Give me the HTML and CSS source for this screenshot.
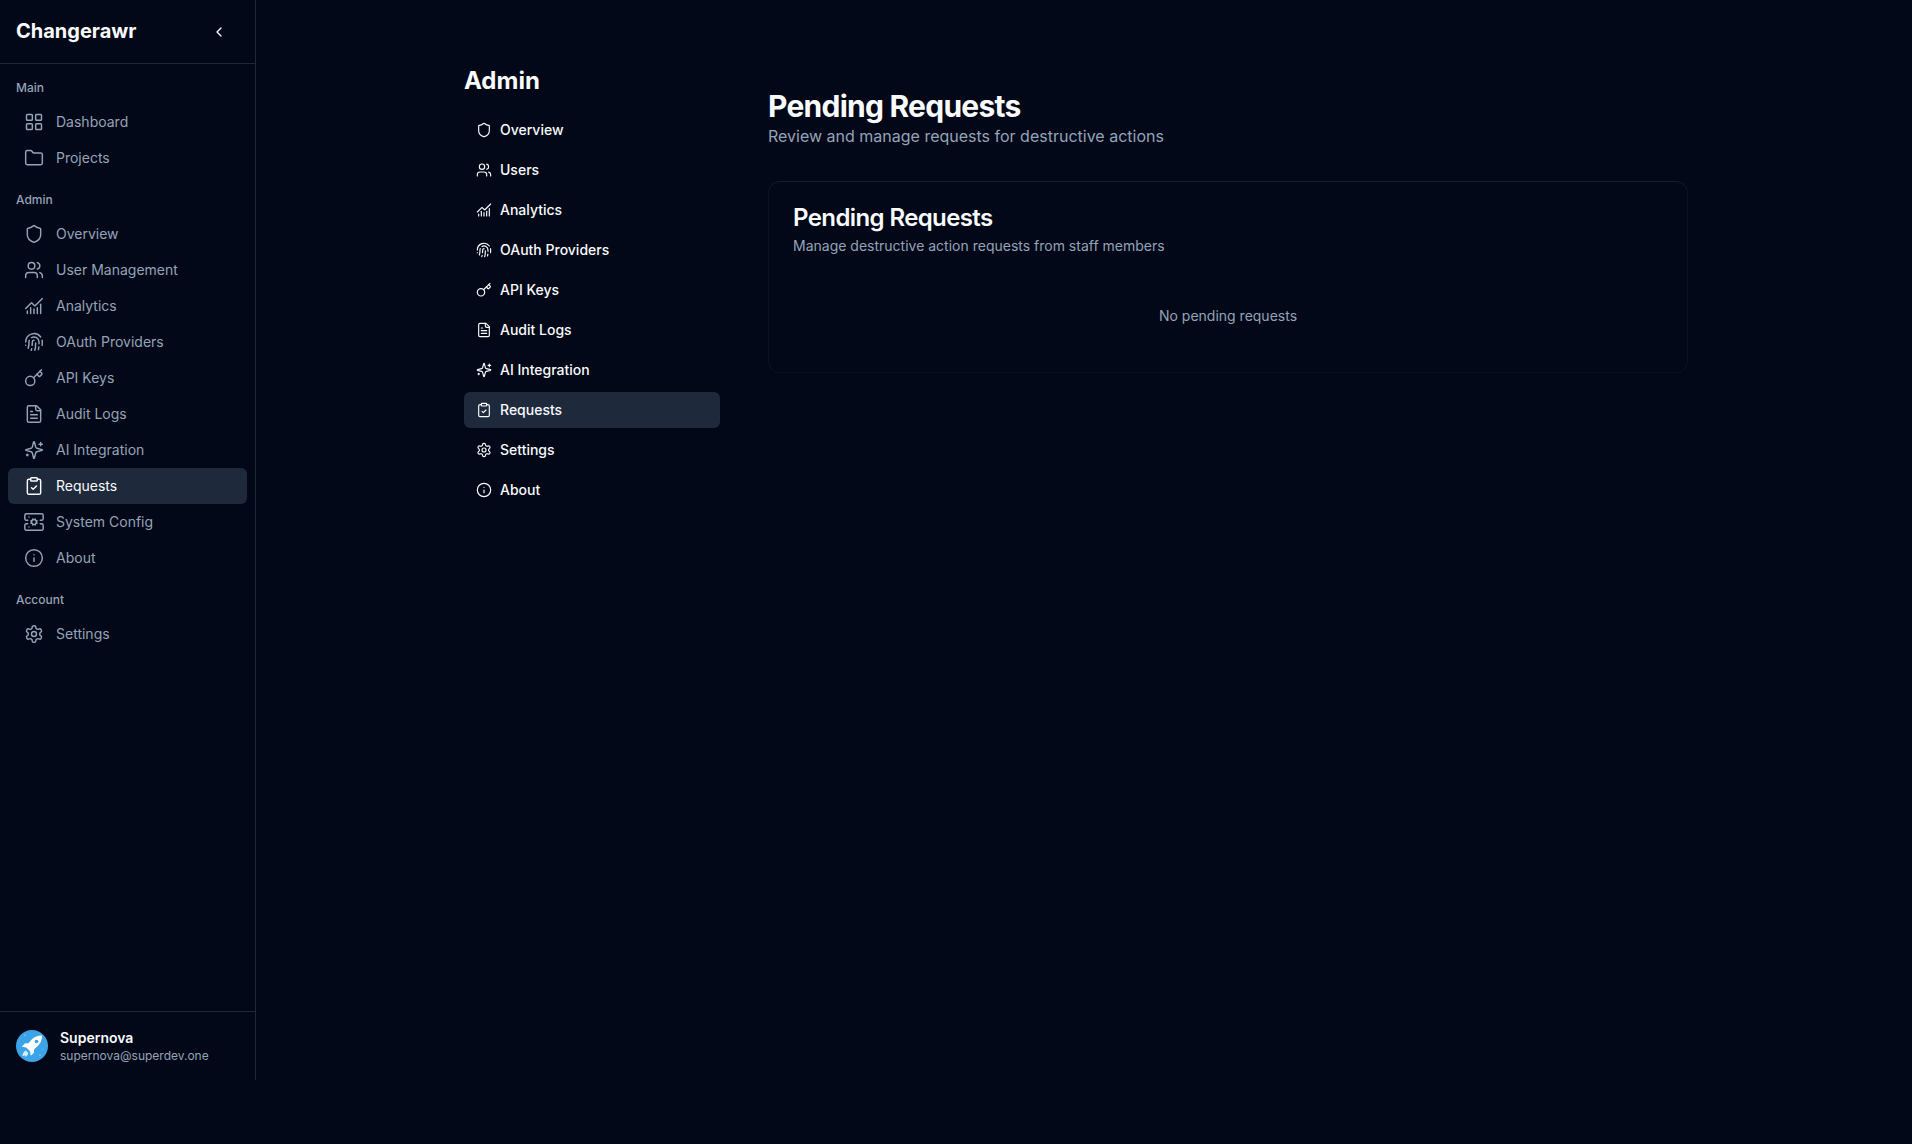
FILE: index.html
```html
<!DOCTYPE html>
<html lang="en">
<head>
    <meta charset="UTF-8">
    <meta name="viewport" content="width=device-width, initial-scale=1.0">
    <title>Pending Requests</title>
    <link rel="stylesheet" href="styles.css">
</head>
<body>

    <!-- Icon set, reused by both menus -->
    <svg class="icon-defs" xmlns="http://www.w3.org/2000/svg">
        <symbol id="i-grid" viewBox="0 0 24 24"><rect x="3" y="3" width="7" height="7" rx="1"/><rect x="14" y="3" width="7" height="7" rx="1"/><rect x="14" y="14" width="7" height="7" rx="1"/><rect x="3" y="14" width="7" height="7" rx="1"/></symbol>
        <symbol id="i-folder" viewBox="0 0 24 24"><path d="M20 20a2 2 0 0 0 2-2V8a2 2 0 0 0-2-2h-7.9a2 2 0 0 1-1.69-.9L9.6 3.9A2 2 0 0 0 7.93 3H4a2 2 0 0 0-2 2v13a2 2 0 0 0 2 2Z"/></symbol>
        <symbol id="i-shield" viewBox="0 0 24 24"><path d="M20 13c0 5-3.5 7.5-7.66 8.95a1 1 0 0 1-.67-.01C7.5 20.5 4 18 4 13V6a1 1 0 0 1 1-1c2 0 4.5-1.2 6.24-2.72a1.17 1.17 0 0 1 1.52 0C14.51 3.81 17 5 19 5a1 1 0 0 1 1 1z"/></symbol>
        <symbol id="i-users" viewBox="0 0 24 24"><path d="M16 21v-2a4 4 0 0 0-4-4H6a4 4 0 0 0-4 4v2"/><circle cx="9" cy="7" r="4"/><path d="M22 21v-2a4 4 0 0 0-3-3.87"/><path d="M16 3.13a4 4 0 0 1 0 7.75"/></symbol>
        <symbol id="i-chart" viewBox="0 0 24 24"><path d="M12 16v5"/><path d="M16 14v7"/><path d="M20 10v11"/><path d="m22 3-8.646 8.646a.5.5 0 0 1-.708 0L9.354 8.354a.5.5 0 0 0-.707 0L2 15"/><path d="M4 18v3"/><path d="M8 14v7"/></symbol>
        <symbol id="i-finger" viewBox="0 0 24 24"><path d="M12 10a2 2 0 0 0-2 2c0 1.02-.1 2.51-.26 4"/><path d="M14 13.12c0 2.38 0 6.38-1 8.88"/><path d="M17.29 21.02c.12-.6.43-2.3.5-3.02"/><path d="M2 12a10 10 0 0 1 18-6"/><path d="M2 16h.01"/><path d="M21.8 16c.2-2 .131-5.354 0-6"/><path d="M5 19.5C5.5 18 6 15 6 12a6 6 0 0 1 .34-2"/><path d="M8.65 22c.21-.66.45-1.32.57-2"/><path d="M9 6.8a6 6 0 0 1 9 5.2v2"/></symbol>
        <symbol id="i-key" viewBox="0 0 24 24"><path d="m15.5 7.5 2.3 2.3a1 1 0 0 0 1.4 0l2.1-2.1a1 1 0 0 0 0-1.4L19 4"/><path d="m21 2-9.6 9.6"/><circle cx="7.5" cy="15.5" r="5.5"/></symbol>
        <symbol id="i-file" viewBox="0 0 24 24"><path d="M15 2H6a2 2 0 0 0-2 2v16a2 2 0 0 0 2 2h12a2 2 0 0 0 2-2V7Z"/><path d="M14 2v4a2 2 0 0 0 2 2h4"/><path d="M10 9H8"/><path d="M16 13H8"/><path d="M16 17H8"/></symbol>
        <symbol id="i-sparkles" viewBox="0 0 24 24"><path d="M9.937 15.5A2 2 0 0 0 8.5 14.063l-6.135-1.582a.5.5 0 0 1 0-.962L8.5 9.936A2 2 0 0 0 9.937 8.5l1.582-6.135a.5.5 0 0 1 .963 0L14.063 8.5A2 2 0 0 0 15.5 9.937l6.135 1.581a.5.5 0 0 1 0 .964L15.5 14.063a2 2 0 0 0-1.437 1.437l-1.582 6.135a.5.5 0 0 1-.963 0z"/><path d="M20 3v4"/><path d="M22 5h-4"/><path d="M4 17v2"/><path d="M5 18H3"/></symbol>
        <symbol id="i-clipboard" viewBox="0 0 24 24"><rect x="8" y="2" width="8" height="4" rx="1"/><path d="M16 4h2a2 2 0 0 1 2 2v14a2 2 0 0 1-2 2H6a2 2 0 0 1-2-2V6a2 2 0 0 1 2-2h2"/><path d="m9 14 2 2 4-4"/></symbol>
        <symbol id="i-server" viewBox="0 0 24 24"><path d="m10.852 14.772-.383.923"/><path d="M13.148 14.772a3 3 0 1 0-2.296-5.544l-.383-.923"/><path d="m13.148 9.228.383-.923"/><path d="m13.531 15.696-.383-.924a3 3 0 0 1-2.296-5.544"/><path d="m14.772 10.852.923-.383"/><path d="m14.772 13.148.923.383"/><path d="M4.5 10H3a2 2 0 0 1-2-2V4a2 2 0 0 1 2-2h18a2 2 0 0 1 2 2v4a2 2 0 0 1-2 2h-1.5"/><path d="M4.5 14H3a2 2 0 0 0-2 2v4a2 2 0 0 0 2 2h18a2 2 0 0 0 2-2v-4a2 2 0 0 0-2-2h-1.5"/><path d="M6 18h.01"/><path d="M6 6h.01"/><path d="m9.228 10.852-.923-.383"/><path d="m9.228 13.148-.923.383"/></symbol>
        <symbol id="i-info" viewBox="0 0 24 24"><circle cx="12" cy="12" r="10"/><path d="M12 16v-4"/><path d="M12 8h.01"/></symbol>
        <symbol id="i-settings" viewBox="0 0 24 24"><path d="M12.22 2h-.44a2 2 0 0 0-2 2v.18a2 2 0 0 1-1 1.73l-.43.25a2 2 0 0 1-2 0l-.15-.08a2 2 0 0 0-2.73.73l-.22.38a2 2 0 0 0 .73 2.73l.15.1a2 2 0 0 1 1 1.72v.51a2 2 0 0 1-1 1.74l-.15.09a2 2 0 0 0-.73 2.73l.22.38a2 2 0 0 0 2.73.73l.15-.08a2 2 0 0 1 2 0l.43.25a2 2 0 0 1 1 1.73V20a2 2 0 0 0 2 2h.44a2 2 0 0 0 2-2v-.18a2 2 0 0 1 1-1.73l.43-.25a2 2 0 0 1 2 0l.15.08a2 2 0 0 0 2.73-.73l.22-.39a2 2 0 0 0-.73-2.73l-.15-.08a2 2 0 0 1-1-1.74v-.5a2 2 0 0 1 1-1.74l.15-.09a2 2 0 0 0 .73-2.73l-.22-.38a2 2 0 0 0-2.73-.73l-.15.08a2 2 0 0 1-2 0l-.43-.25a2 2 0 0 1-1-1.73V4a2 2 0 0 0-2-2z"/><circle cx="12" cy="12" r="3"/></symbol>
    </svg>

    <div class="layout">

        <aside class="sidebar">
            <div class="sidebar-header">
                <span class="brand">Changerawr</span>
                <svg class="collapse" viewBox="0 0 24 24"><path d="m15 18-6-6 6-6"/></svg>
            </div>

            <nav class="sidebar-nav">
                <div class="nav-label">Main</div>
                <a class="nav-item"><svg class="nav-icon"><use href="#i-grid"/></svg>Dashboard</a>
                <a class="nav-item"><svg class="nav-icon"><use href="#i-folder"/></svg>Projects</a>

                <div class="nav-label">Admin</div>
                <a class="nav-item"><svg class="nav-icon"><use href="#i-shield"/></svg>Overview</a>
                <a class="nav-item"><svg class="nav-icon"><use href="#i-users"/></svg>User Management</a>
                <a class="nav-item"><svg class="nav-icon"><use href="#i-chart"/></svg>Analytics</a>
                <a class="nav-item"><svg class="nav-icon"><use href="#i-finger"/></svg>OAuth Providers</a>
                <a class="nav-item"><svg class="nav-icon"><use href="#i-key"/></svg>API Keys</a>
                <a class="nav-item"><svg class="nav-icon"><use href="#i-file"/></svg>Audit Logs</a>
                <a class="nav-item"><svg class="nav-icon"><use href="#i-sparkles"/></svg>AI Integration</a>
                <a class="nav-item active"><svg class="nav-icon"><use href="#i-clipboard"/></svg>Requests</a>
                <a class="nav-item"><svg class="nav-icon"><use href="#i-server"/></svg>System Config</a>
                <a class="nav-item"><svg class="nav-icon"><use href="#i-info"/></svg>About</a>

                <div class="nav-label">Account</div>
                <a class="nav-item"><svg class="nav-icon"><use href="#i-settings"/></svg>Settings</a>
            </nav>

            <div class="user-box">
                <svg class="avatar" viewBox="0 0 32 32">
                    <circle cx="16" cy="16" r="16" fill="#3ba3e6"/>
                    <path d="M26.500 5.500c-4.800-.2-8.600 1.500-11.300 4.500l-2.700 3.200-3.700.4-3 3.200 4.400.6 3.900 3.900.6 4.400 3.200-3 .4-3.700 3.200-2.700c3-2.700 4.700-6.200 4.500-10.800z" fill="#fff"/>
                    <circle cx="20.500" cy="11.500" r="1.800" fill="#3ba3e6"/>
                    <path d="M10 20.500c-2 .8-3.300 2.800-3.700 5.500 1.300-.1 2.300-.5 3-1.100-.1.7-.3 1.300-.4 1.900 1.800-.6 3-1.900 3.400-3.500z" fill="#d7eefb"/>
                    <circle cx="9" cy="5" r="0.500" fill="#fff"/>
                    <circle cx="24" cy="25" r="0.500" fill="#fff"/>
                    <circle cx="27" cy="19" r="0.400" fill="#fff"/>
                </svg>
                <div class="user-text">
                    <div class="user-name">Supernova</div>
                    <div class="user-mail">supernova@superdev.one</div>
                </div>
            </div>
        </aside>

        <main class="content">
            <div class="admin-menu">
                <h2 class="admin-title">Admin</h2>
                <a class="admin-item"><svg class="admin-icon"><use href="#i-shield"/></svg>Overview</a>
                <a class="admin-item"><svg class="admin-icon"><use href="#i-users"/></svg>Users</a>
                <a class="admin-item"><svg class="admin-icon"><use href="#i-chart"/></svg>Analytics</a>
                <a class="admin-item"><svg class="admin-icon"><use href="#i-finger"/></svg>OAuth Providers</a>
                <a class="admin-item"><svg class="admin-icon"><use href="#i-key"/></svg>API Keys</a>
                <a class="admin-item"><svg class="admin-icon"><use href="#i-file"/></svg>Audit Logs</a>
                <a class="admin-item"><svg class="admin-icon"><use href="#i-sparkles"/></svg>AI Integration</a>
                <a class="admin-item active"><svg class="admin-icon"><use href="#i-clipboard"/></svg>Requests</a>
                <a class="admin-item"><svg class="admin-icon"><use href="#i-settings"/></svg>Settings</a>
                <a class="admin-item"><svg class="admin-icon"><use href="#i-info"/></svg>About</a>
            </div>

            <section class="page">
                <h1 class="page-title">Pending Requests</h1>
                <p class="page-sub">Review and manage requests for destructive actions</p>

                <div class="card">
                    <h3 class="card-title">Pending Requests</h3>
                    <p class="card-sub">Manage destructive action requests from staff members</p>
                    <p class="empty">No pending requests</p>
                </div>
            </section>
        </main>

    </div>

</body>
</html>
```

FILE: styles.css
```css
body {
    margin: 0;
    height: 1144px;
    background-color: #020817;
    color: #f8fafc;
    font-family: Inter, "Liberation Sans", sans-serif;
    font-size: 14px;
    overflow: hidden;
}

h1, h2, h3, p {
    margin: 0;
}

.icon-defs {
    display: none;
}

.layout {
    display: flex;
    align-items: flex-start;
}

/* Left sidebar */
.sidebar {
    width: 255px;
    height: 1080px;
    flex-shrink: 0;
    border-right: 1px solid #1e293b;
    display: flex;
    flex-direction: column;
}

.sidebar-header {
    height: 63px;
    padding: 0 16px;
    border-bottom: 1px solid #1e293b;
    display: flex;
    align-items: center;
    justify-content: space-between;
}

.brand {
    font-size: 20px;
    line-height: 28px;
    font-weight: 700;
    margin-top: -1px;
}

.collapse {
    width: 16px;
    height: 16px;
    margin-right: 12px;
    fill: none;
    stroke: #f8fafc;
    stroke-width: 2;
    stroke-linecap: round;
    stroke-linejoin: round;
}

.sidebar-nav {
    flex: 1;
    padding: 16px 8px 0;
}

.nav-label {
    height: 16px;
    line-height: 16px;
    padding-left: 8px;
    margin: 0 0 8px;
    font-size: 12px;
    font-weight: 500;
    color: #94a3b8;
}

.nav-item + .nav-label {
    margin-top: 16px;
}

.nav-item {
    height: 36px;
    padding-left: 16px;
    display: flex;
    align-items: center;
    gap: 12px;
    border-radius: 6px;
    line-height: 20px;
    color: #94a3b8;
}

.nav-item.active {
    background-color: #1e293b;
    color: #f8fafc;
}

.nav-icon {
    width: 20px;
    height: 20px;
    flex-shrink: 0;
    fill: none;
    stroke: currentColor;
    stroke-width: 1.75;
    stroke-linecap: round;
    stroke-linejoin: round;
}

.user-box {
    height: 68px;
    padding: 0 16px;
    border-top: 1px solid #1e293b;
    display: flex;
    align-items: center;
    gap: 12px;
}

.avatar {
    width: 32px;
    height: 32px;
    flex-shrink: 0;
}

.user-name {
    font-weight: 600;
    line-height: 20px;
}

.user-mail {
    font-size: 12px;
    line-height: 16px;
    color: #94a3b8;
}

/* Content area: admin menu and page */
.content {
    flex: 1;
    padding: 65px 224px 0 208px;
    display: flex;
    gap: 48px;
}

.admin-menu {
    width: 256px;
    flex-shrink: 0;
    display: flex;
    flex-direction: column;
    gap: 4px;
}

.admin-title {
    font-size: 24px;
    line-height: 32px;
    font-weight: 700;
    margin-bottom: 11px;
}

.admin-item {
    height: 36px;
    padding-left: 12px;
    display: flex;
    align-items: center;
    gap: 8px;
    border-radius: 6px;
    line-height: 20px;
    font-weight: 500;
}

.admin-item.active {
    background-color: #1e293b;
}

.admin-icon {
    width: 16px;
    height: 16px;
    flex-shrink: 0;
    fill: none;
    stroke: currentColor;
    stroke-width: 1.75;
    stroke-linecap: round;
    stroke-linejoin: round;
}

.page {
    flex: 1;
    padding-top: 23px;
}

.page-title {
    font-size: 30px;
    line-height: 36px;
    font-weight: 700;
    letter-spacing: -0.75px;
}

.page-sub {
    font-size: 16px;
    line-height: 24px;
    color: #94a3b8;
}

.card {
    margin-top: 33px;
    height: 192px;
    box-sizing: border-box;
    padding: 24px;
    border: 1px solid;
    border-color: #151c2c #0d1321 #090e1c;
    border-radius: 12px;
}

.card-title {
    font-size: 24px;
    line-height: 24px;
    font-weight: 600;
    letter-spacing: -0.6px;
}

.card-sub {
    margin-top: 6px;
    line-height: 20px;
    color: #94a3b8;
}

.empty {
    margin-top: 50px;
    line-height: 20px;
    text-align: center;
    color: #94a3b8;
}
```
